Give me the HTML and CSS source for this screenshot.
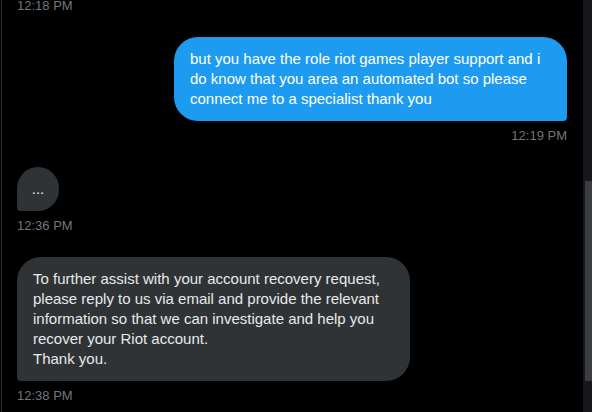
FILE: index.html
```html
<!DOCTYPE html>
<html>
<head>
<meta charset="utf-8">
<link rel="stylesheet" href="styles.css">
</head>
<body>
<div class="window">
  <div class="chat">
    <div class="msg theirs">
      <div class="time first">12:18 PM</div>
    </div>
    <div class="msg mine">
      <div class="bubble blue wide">but you have the role riot games player support and i do know that you area an automated bot so please connect me to a specialist thank you</div>
      <div class="time">12:19 PM</div>
    </div>
    <div class="msg theirs">
      <div class="bubble gray dots">...</div>
      <div class="time">12:36 PM</div>
    </div>
    <div class="msg theirs">
      <div class="bubble gray wide">To further assist with your account recovery request, please reply to us via email and provide the relevant information so that we can investigate and help you recover your Riot account.<br>Thank you.</div>
      <div class="time">12:38 PM</div>
    </div>
  </div>
  <div class="scrollbar"><div class="thumb"></div></div>
</div>
</body>
</html>
```
FILE: styles.css
```css
html, body {
  margin: 0;
  padding: 0;
  background: #000;
  height: 100%;
  overflow: hidden;
}
body {
  font-family: "Liberation Sans", Arial, sans-serif;
}
.window {
  display: flex;
  height: 412px;
  width: 592px;
  padding-left: 1px;
  box-sizing: border-box;
}
.chat {
  flex: 1;
  border-left: 1px solid #2f3336;
  padding: 0 16px 0 15px;
  display: flex;
  flex-direction: column;
  gap: 23px;
  margin-top: -2px;
}
.msg {
  display: flex;
  flex-direction: column;
}
.msg.mine { align-items: flex-end; }
.msg.theirs { align-items: flex-start; }
.bubble {
  font-size: 15px;
  line-height: 20px;
  padding: 12px 16px;
  border-radius: 24px;
  box-sizing: border-box;
}
.bubble.wide { width: 393px; }
.blue {
  background: #1d9bf0;
  color: #fff;
  border-bottom-right-radius: 4px;
}
.gray {
  background: #2f3336;
  color: #e7e9ea;
  border-bottom-left-radius: 4px;
}
.dots {
  width: 42px;
  padding: 12px 0;
  text-align: center;
}
.time {
  font-size: 13px;
  line-height: 16px;
  color: #71767b;
  margin-top: 7px;
}
.time.first { margin-top: 0; }
.scrollbar {
  width: 9px;
  background: #16181c;
  position: relative;
}
.thumb {
  position: absolute;
  left: 2px;
  right: 0;
  top: 181px;
  height: 200px;
  background: #3a3d40;
}
```
